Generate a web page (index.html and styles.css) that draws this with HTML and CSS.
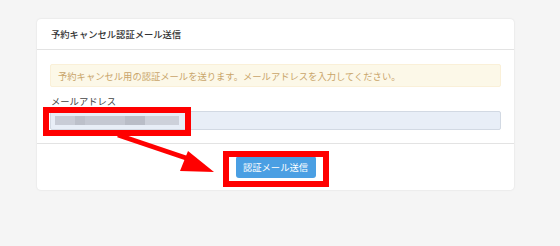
FILE: index.html
```html
<!DOCTYPE html>
<html lang="ja">
<head>
<meta charset="utf-8">
<link rel="stylesheet" href="styles.css">
</head>
<body>
<div class="page">
  <div class="card">
    <div class="card-header">予約キャンセル認証メール送信</div>
    <div class="card-body">
      <div class="alert">予約キャンセル用の認証メールを送ります。メールアドレスを入力してください。</div>
      <label class="label">メールアドレス</label>
      <div class="input">
        <span class="blur b1"></span><span class="blur b2"></span><span class="blur b3"></span><span class="blur b4"></span><span class="blur b5"></span>
      </div>
    </div>
    <div class="card-footer">
      <button class="btn">認証メール送信</button>
    </div>
  </div>
  <div class="mark mark-input"></div>
  <div class="mark mark-btn"></div>
  <svg class="arrow" width="560" height="246" viewBox="0 0 560 246">
    <line x1="118" y1="135" x2="192" y2="160" stroke="#ff0000" stroke-width="5"/>
    <polygon points="188,151 214,172 180,171" fill="#ff0000"/>
  </svg>
</div>
</body>
</html>
```
FILE: styles.css
```css
html, body {
  margin: 0;
  padding: 0;
  background: #f5f5f5;
  font-family: "Noto Sans CJK JP", "Noto Sans", sans-serif;
  font-size: 9.3px;
  color: #333;
}
.page {
  position: relative;
  width: 560px;
  height: 246px;
  padding: 19px 0 0 37px;
  box-sizing: border-box;
}
.card {
  width: 477px;
  height: 171px;
  background: #fff;
  border-radius: 4px;
  box-shadow: 0 0 2px rgba(0,0,0,0.12);
  display: flex;
  flex-direction: column;
}
.card-header {
  height: 30px;
  border-bottom: 1px solid #e3e3e3;
  padding-left: 14px;
  display: flex;
  align-items: center;
  font-weight: 500;
  color: #333;
  box-sizing: content-box;
}
.card-body {
  padding: 14px 13px 0 13px;
  height: 79px;
  border-bottom: 1px solid #e3e3e3;
  display: flex;
  flex-direction: column;
}
.alert {
  height: 23px;
  background: #fcf8e8;
  border: 1px solid #faf0d8;
  border-radius: 2px;
  box-sizing: border-box;
  display: flex;
  align-items: center;
  padding-left: 7px;
  color: #c9a56a;
}
.label {
  margin-top: 8px;
  height: 13px;
  line-height: 13px;
  color: #444;
  padding-left: 1px;
}
.input {
  margin-top: 3px;
  height: 19px;
  background: #e8eef7;
  border: 1px solid #d2d9e3;
  border-radius: 2px;
  box-sizing: border-box;
  display: flex;
  align-items: center;
  padding-left: 4px;
}
.blur {
  height: 9px;
  display: block;
}
.b1 { width: 20px; background: #c8ccd6; }
.b2 { width: 10px; background: #bcc0ca; }
.b3 { width: 40px; background: #c4c8d2; }
.b4 { width: 20px; background: #b9bdc7; }
.b5 { width: 34px; background: #cdd1da; }
.card-footer {
  flex: 1;
  display: flex;
  justify-content: center;
  align-items: center;
}
.btn {
  width: 80px;
  height: 22px;
  background: #4a9fe3;
  color: #fff;
  border: none;
  border-radius: 3px;
  font-family: inherit;
  font-size: 9.3px;
  padding: 0;
}
.mark {
  position: absolute;
  border: 6px solid #ff0000;
  box-sizing: border-box;
}
.mark-input {
  left: 43px;
  top: 107px;
  width: 148px;
  height: 29px;
}
.mark-btn {
  left: 223px;
  top: 151px;
  width: 106px;
  height: 36px;
}
.arrow {
  position: absolute;
  left: 0;
  top: 0;
}
```
